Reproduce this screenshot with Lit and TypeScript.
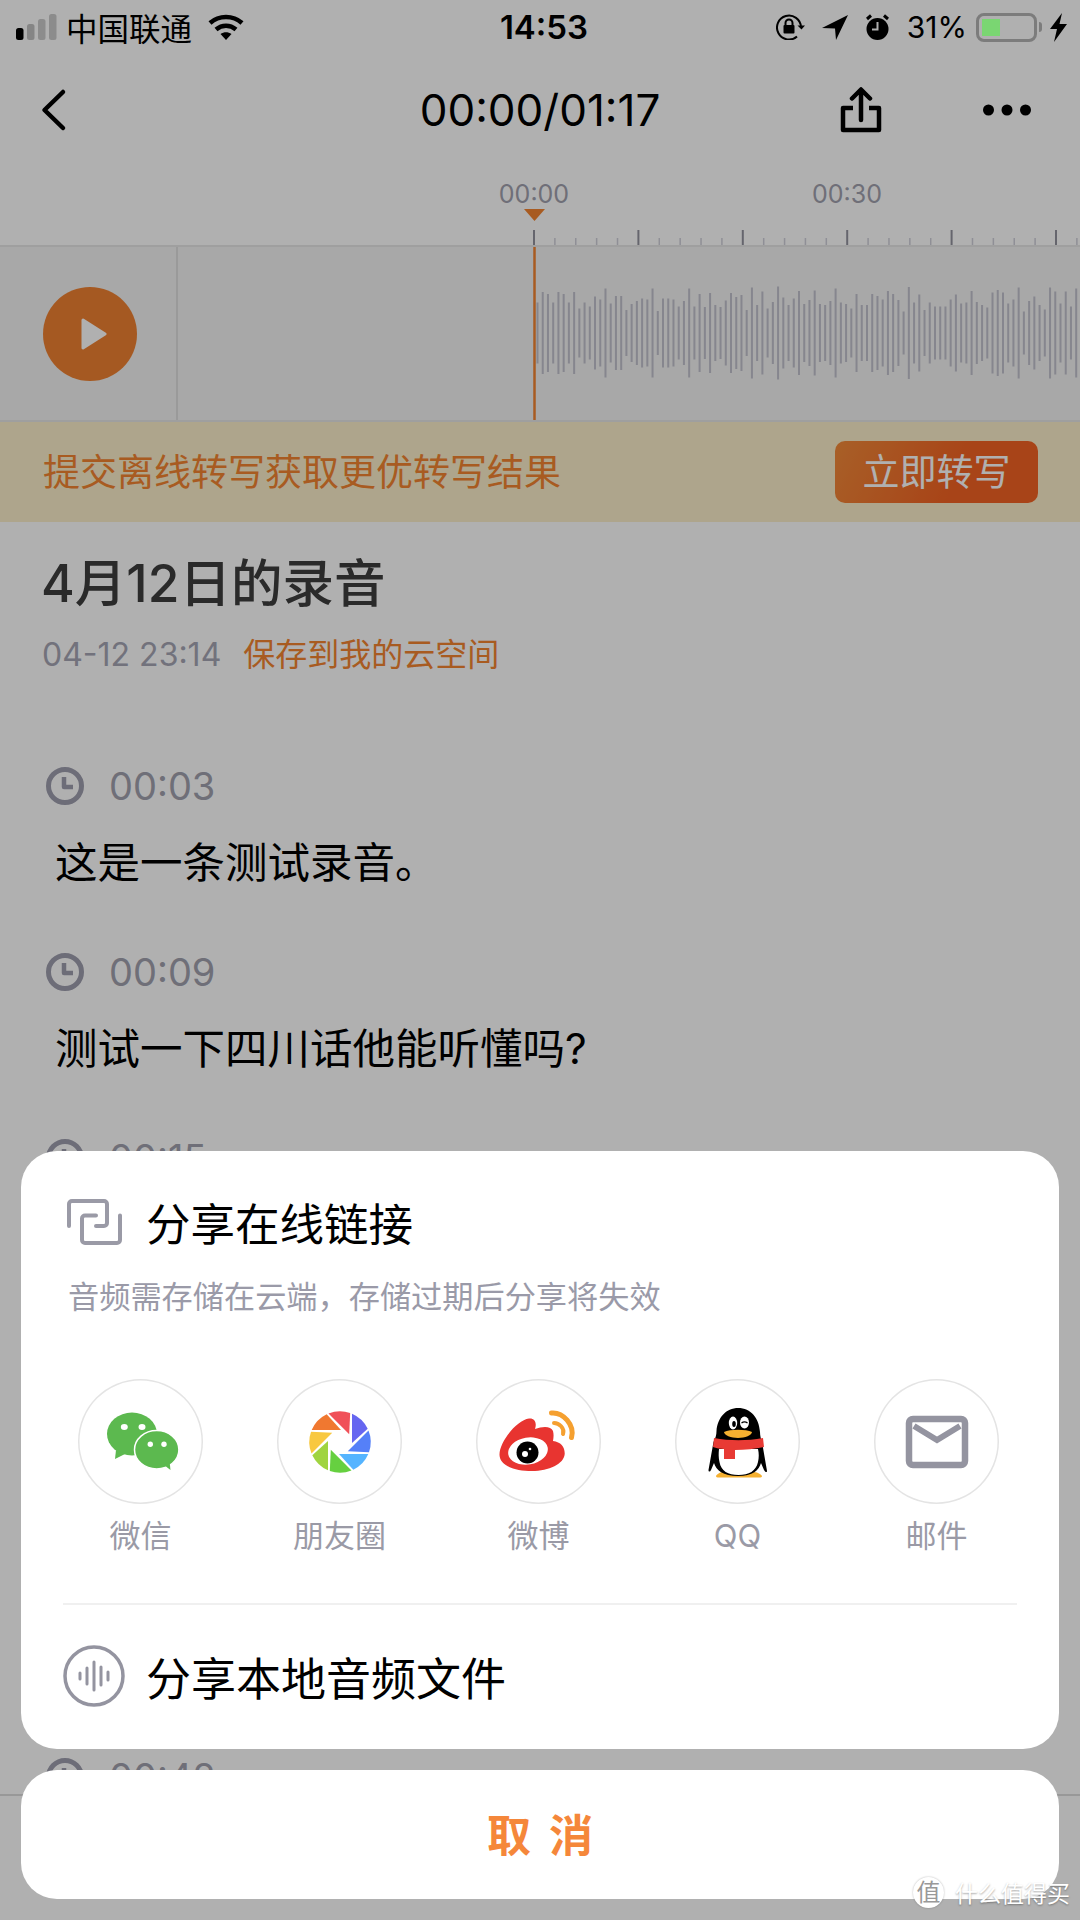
import { LitElement, html, css, svg } from "lit";
import { customElement } from "lit/decorators.js";

// bar heights read off the reference, one per 5.23px
const WAVE = [61,82,78,61,82,78,61,82,49,61,53,73,67,89,59,74,74,46,58,64,69,67,89,44,69,69,67,53,64,89,53,78,52,80,56,52,65,80,72,76,46,91,56,83,49,62,93,71,56,69,84,58,66,85,58,56,64,89,61,58,49,78,56,56,78,74,67,84,78,66,43,92,61,77,46,61,53,53,53,67,77,59,61,84,62,56,51,81,86,81,59,67,91,43,64,73,56,47,91,83,59,83,53,89];

const BLADES = ["#6666f0","#5580f8","#55b4ff","#66d040","#a0d440","#f8c840","#f07830","#f05058"];

const clock = html`<svg class="clock" width="38" height="38" viewBox="0 0 38 38" fill="none" stroke="#9e9eae" stroke-width="5">
  <circle cx="19" cy="19" r="16.5"/><path d="M18 10v10h9" stroke-width="4.5" stroke-linejoin="round"/></svg>`;

const wechat = html`<svg viewBox="0 0 124 124" width="124" height="124">
  <ellipse cx="53" cy="54" rx="25" ry="21.5" fill="#5cb94f"/>
  <path d="M37 70 36 79l10-5z" fill="#5cb94f"/>
  <ellipse cx="45.3" cy="47" rx="3.5" ry="3" fill="#fff"/><ellipse cx="63" cy="47" rx="3.5" ry="3" fill="#fff"/>
  <ellipse cx="77.7" cy="69.7" rx="22.2" ry="19.2" fill="#5cb94f" stroke="#fff" stroke-width="1.5"/>
  <path d="M85 85l6.500 5-1-9z" fill="#5cb94f"/>
  <circle cx="71.300" cy="64.300" r="2.700" fill="#fff"/><circle cx="85" cy="64.300" r="2.700" fill="#fff"/>
</svg>`;

const moments = html`<svg viewBox="0 0 124 124" width="124" height="124">
  ${BLADES.map((c, i) => svg`<path transform="rotate(${i * 45} 62 62)" fill="${c}" d="M74 33.700A30.800 30.800 0 0 1 89.700 48.700L74 63z"/>`)}
</svg>`;

const weibo = html`<svg viewBox="0 0 124 124" width="124" height="124">
  <path fill="#e83430" d="M22.500 75C22 62 40 40 52 38.500 58 38 60 43 58 49 66 46 74 46 76 51 77 55 76.500 58 76 61 84 62 88 67 87.700 74 87 84 72 91 55 91 38 91 23 86 22.500 75Z"/>
  <ellipse cx="51" cy="71" rx="20" ry="13.500" fill="#fff" transform="rotate(-10 51 71)"/>
  <circle cx="50.500" cy="72.500" r="11" fill="#000"/>
  <circle cx="48" cy="74" r="3" fill="#fff"/><circle cx="53" cy="69" r="1.300" fill="#fff"/>
  <path d="M74.500 33C86 32 98 45 94.500 57.500" fill="none" stroke="#f5a030" stroke-width="5" stroke-linecap="round"/>
  <path d="M77 43C82 43 88 48 86 54" fill="none" stroke="#f5a030" stroke-width="4" stroke-linecap="round"/>
</svg>`;

const qq = html`<svg viewBox="0 0 124 124" width="124" height="124">
  <path fill="#f5b030" d="M40 96c2-4 8-5 14-4h16c6-1 14 0 16 4 0 1-1 1.500-3 1.500H43c-2 0-3-.5-3-1.500Z"/>
  <path fill="#000" d="M62 28c13 0 21 10 22 24 0 4 1 7 2 10l5 29c0 2-2 1-3-1l-3-7c-2 7-8 13-23 13s-22-6-24-13l-3 7c-1 2-2.500 2-2.500 0l5-28c2-4 3-7 3-11 1-13 9-23 22-23Z"/>
  <path fill="#fff" d="M43 69h39c1 4 1 9 0 13-2 9-9 13-19.500 13S45 91 43.500 82c-1-4-1-9-.5-13Z"/>
  <path fill="#e83a34" d="M38 58c16 3 33 3 49 0l1 9c-9 2-19 3-29 3v9H48V69c-4 0-8-1-11-2Z"/>
  <path fill="#f5b030" d="M48 52c6-3 22-3 28 0 0 3-7 6-14 6s-14-3-14-6Z"/>
  <ellipse cx="57" cy="43" rx="4.200" ry="6.500" fill="#fff"/><ellipse cx="58" cy="44" rx="1.800" ry="3" fill="#000"/>
  <ellipse cx="68.500" cy="42.500" rx="4.500" ry="6" fill="#fff"/><path d="M65.500 43c2-1.500 4-1.500 6 0" fill="none" stroke="#000" stroke-width="1.300"/>
</svg>`;

const mail = html`<svg viewBox="0 0 124 124" width="124" height="124" fill="none" stroke="#9494a0">
  <rect x="34" y="39" width="56" height="46" rx="4" stroke-width="6.500"/>
  <path d="M39 46l23 14 23-14" stroke-width="6"/>
</svg>`;

@customElement("app-root")
export class AppRoot extends LitElement {
  static styles = css`
    :host {
      display: block;
      position: relative;
      width: 1080px;
      height: 1920px;
      overflow: hidden;
      background: #fff;
      font-family: Inter, "Noto Sans CJK SC", sans-serif;
      color: #000;
    }
    svg { display: block; flex: none; }

    .status {
      position: relative;
      z-index: 2;
      height: 54px;
      display: grid;
      grid-template-columns: 1fr auto 1fr;
      align-items: center;
      font-size: 30px;
    }
    .status-left { display: flex; align-items: center; padding-left: 15px; }
    .carrier { margin-left: 8px; margin-right: 16px; font-size: 31.500px; }
    .clock-time { font-weight: 600; font-size: 33px; padding-left: 8px; }
    .status-right { display: flex; align-items: center; justify-content: flex-end; padding-right: 13px; }
    .pct { margin: 0 9px 0 17px; }
    .battery {
      box-sizing: border-box;
      width: 61px;
      height: 29px;
      border: 3px solid #7c7c7c;
      border-radius: 8px;
      padding: 3px;
    }
    .battery i { display: block; width: 18px; height: 17px; background: #7ad672; }
    .nub { width: 3px; height: 10px; background: #7c7c7c; border-radius: 0 3px 3px 0; margin: 0 8px 0 2px; }

    .nav {
      height: 112px;
      display: grid;
      grid-template-columns: 1fr auto 1fr;
      align-items: center;
      font-size: 44px;
    }
    .back { padding-left: 40px; }
    .nav-right { display: flex; justify-content: flex-end; align-items: center; gap: 101px; padding-right: 49px; }

    .ruler {
      position: relative;
      height: 79px;
    }
    .ruler span {
      position: absolute;
      top: 13px;
      line-height: 30px;
      font-size: 25px;
      color: #a1a1ae;
      transform: translateX(-50%);
    }
    .ruler svg { position: absolute; left: 0; top: 0; }

    .track {
      height: 177px;
      display: flex;
      background: #f3f3f3;
      border-top: 2px solid #e6e6e6;
      border-bottom: 2px solid #e6e6e6;
      box-sizing: border-box;
    }
    .play-cell {
      width: 178px;
      box-sizing: border-box;
      border-right: 2px solid #e0e0e0;
      padding-left: 43px;
      display: flex;
      align-items: center;
    }
    .play {
      width: 94px;
      height: 94px;
      border-radius: 50%;
      background: #f08232;
      display: flex;
      align-items: center;
      justify-content: center;
      padding-left: 8px;
      box-sizing: border-box;
    }

    .banner {
      height: 100px;
      background: #fcf0cb;
      display: flex;
      align-items: center;
      justify-content: space-between;
      padding: 0 42px 0 43px;
      font-size: 37px;
      color: #f38531;
    }
    .banner span { margin-bottom: 4px; }
    .convert {
      box-sizing: border-box;
      width: 203px;
      height: 62px;
      padding-bottom: 4px;
      border-radius: 10px;
      background: linear-gradient(115deg, #f48b3a, #f46323 60%);
      color: #fff;
      font-size: 37px;
      display: flex;
      align-items: center;
      justify-content: center;
    }

    .body { padding: 31px 0 0 41px; }
    .title { font-size: 51.500px; line-height: 60px; font-weight: 500; color: #3d3d3d; }
    .meta { margin-top: 22px; display: flex; gap: 22px; padding-left: 1px; font-size: 32px; line-height: 40px; color: #a5a5b4; }
    .meta em { font-style: normal; color: #f38531; }
    .rows { margin-top: 93px; }
    .row { margin-bottom: 63px; }
    .row.late { margin-top: 496px; }
    .when { display: flex; align-items: center; gap: 25px; padding-left: 5px; height: 36px; font-size: 38px; color: #a1a1ae; }
    .said { margin-top: 31px; padding-left: 14px; font-size: 42.500px; line-height: 56px; height: 56px; }

    .footer {
      position: absolute;
      left: 0;
      right: 0;
      bottom: 0;
      height: 124px;
      background: #fff;
      border-top: 2px solid #dcdcdc;
    }

    .scrim {
      position: absolute;
      inset: 0;
      background: rgba(0, 0, 0, 0.31);
      display: flex;
      flex-direction: column;
      justify-content: flex-end;
      gap: 21px;
      padding: 0 21px 21px;
    }
    .sheet { background: #fff; border-radius: 36px; }
    .share { height: 598px; box-sizing: border-box; padding-top: 47px; }
    .head { display: flex; align-items: center; height: 48px; padding-left: 45px; gap: 24px; font-size: 44.500px; }
    .head span { margin-bottom: 2px; }
    .sub { margin: 27px 0 0 47px; font-size: 31.200px; line-height: 48px; color: #9a9aa8; }
    .targets { display: flex; padding-left: 20px; margin-top: 58px; }
    .target { width: 199px; display: flex; flex-direction: column; align-items: center; font-size: 31px; color: #9a9aa6; }
    .disc {
      width: 125px;
      height: 125px;
      box-sizing: border-box;
      border-radius: 50%;
      box-shadow: inset 0 0 0 1.500px #e4e4e4;
      display: flex;
      align-items: center;
      justify-content: center;
    }
    .target span { margin-top: 12px; line-height: 40px; }
    .rule { height: 2px; background: #f0f0f0; margin: 47px 42px 0; }
    .local { display: flex; align-items: center; gap: 21px; height: 62px; margin: 40px 0 0 42px; font-size: 45px; }
    .cancel {
      box-sizing: border-box;
      height: 129px;
      padding-bottom: 4px;
      display: flex;
      align-items: center;
      justify-content: center;
      font-size: 44px;
      font-weight: 700;
      letter-spacing: 18px;
      text-indent: 18px;
      color: #f5873a;
    }

    .mark {
      position: absolute;
      z-index: 3;
      right: 10px;
      bottom: 11px;
      display: flex;
      align-items: center;
      gap: 11px;
      font-size: 23px;
      color: #fff;
      text-shadow: 0 1px 2px rgba(0, 0, 0, 0.35);
    }
    .mark b {
      width: 31px;
      height: 31px;
      border-radius: 50%;
      background: #fff;
      color: #999;
      font-weight: 400;
      font-size: 24px;
      line-height: 31px;
      text-align: center;
      text-shadow: none;
      box-shadow: 0 0 2px rgba(0, 0, 0, 0.3);
    }
  `;

  private statusBar() {
    return html`<div class="status">
      <div class="status-left">
        <svg width="43" height="28" viewBox="0 0 43 28">
          <rect x="1" y="15" width="7.500" height="12" rx="2.500" fill="#000"/>
          <rect x="12" y="11" width="7.500" height="16" rx="2.500" fill="#858585"/>
          <rect x="23" y="6" width="7.500" height="21" rx="2.500" fill="#8c8c8c"/>
          <rect x="34" y="1" width="7.500" height="26" rx="2.500" fill="#8c8c8c"/>
        </svg>
        <span class="carrier">中国联通</span>
        <svg width="36" height="26" viewBox="0 0 36 26" fill="none" stroke="#000" stroke-width="4.500">
          <path d="M2 9C11 1 25 1 34 9"/><path d="M8 15.500C14 10.500 22 10.500 28 15.500"/>
          <path d="M12.500 20C16 17.500 20 17.500 23.500 20L18 26Z" fill="#000" stroke="none"/>
        </svg>
      </div>
      <div class="clock-time">14:53</div>
      <div class="status-right">
        <svg width="30" height="26" viewBox="0 0 30 26" fill="none" stroke="#000" stroke-width="2">
          <path d="M25 13A12 12 0 1 0 21 22.500"/><path d="M21.500 11.500L25.500 15.500 29 11.500" fill="#000" stroke="none"/>
          <rect x="7.500" y="11" width="11" height="8.500" rx="1" fill="#000" stroke="none"/>
          <path d="M9.500 11V9a3.500 3.500 0 0 1 7 0v2"/>
        </svg>
        <svg style="margin-left:16px" width="26" height="26" viewBox="0 0 26 26"><path d="M26 1L0 14 13 14.500 14 26Z" fill="#000"/></svg>
        <svg style="margin-left:17px" width="25" height="27" viewBox="0 0 25 27">
          <circle cx="12.500" cy="15" r="11" fill="#000"/>
          <path d="M2 5L6 1.500M23 5L19 1.500" stroke="#000" stroke-width="3"/>
          <path d="M12.500 8v7.500H7" fill="none" stroke="#b0b0b0" stroke-width="2"/>
        </svg>
        <span class="pct">31%</span>
        <div class="battery"><i></i></div>
        <div class="nub"></div>
        <svg width="17" height="29" viewBox="0 0 17 29"><path d="M12 0L0 16H7L4 29 17 11H9.500Z" fill="#000"/></svg>
      </div>
    </div>`;
  }

  private navBar() {
    return html`<div class="nav">
      <div class="back">
        <svg width="28" height="44" viewBox="0 0 28 44" fill="none" stroke="#000" stroke-width="4.500" stroke-linecap="round" stroke-linejoin="round">
          <path d="M23 4L4.500 22 23 40"/>
        </svg>
      </div>
      <div>00:00/01:17</div>
      <div class="nav-right">
        <svg width="42" height="46" viewBox="0 0 42 46" fill="none" stroke="#000" stroke-width="4.500" stroke-linejoin="round" stroke-linecap="round">
          <path d="M13 21H3V43H39V21H29" stroke-linecap="butt"/><path d="M21 33V3M12 11.500L21 2.500 30 11.500"/>
        </svg>
        <svg width="48" height="12" viewBox="0 0 48 12" fill="#000">
          <circle cx="5.500" cy="6" r="5.500"/><circle cx="24" cy="6" r="5.500"/><circle cx="42.500" cy="6" r="5.500"/>
        </svg>
      </div>
    </div>`;
  }

  private ruler() {
    const ticks = [];
    for (let i = 0; i < 27; i++) {
      const x = 534 + i * 20.88;
      const major = i % 5 === 0;
      ticks.push(svg`<line x1=${x} x2=${x} y1=${major ? 64 : 72} y2="79" stroke=${major ? "#93939f" : "#cfcfd9"} stroke-width=${major ? 2 : 1.5}/>`);
    }
    return html`<div class="ruler">
      <svg width="1080" height="79" viewBox="0 0 1080 79">
        ${ticks}
        <path d="M524 43H545L534.500 55Z" fill="#f38531"/>
      </svg>
      <span style="left:534px">00:00</span>
      <span style="left:847px">00:30</span>
    </div>`;
  }

  private track() {
    return html`<div class="track">
      <div class="play-cell">
        <div class="play">
          <svg width="26" height="34" viewBox="0 0 26 34">
            <path d="M2 3L24 17 2 31Z" fill="#fff" stroke="#fff" stroke-width="3" stroke-linejoin="round"/>
          </svg>
        </div>
      </div>
      <svg width="902" height="173" viewBox="0 0 902 173">
        ${WAVE.map((h, i) => {
          const x = 359.5 + i * 5.23;
          return svg`<line x1=${x} x2=${x} y1=${86 - h / 2} y2=${86 + h / 2} stroke="#c2c2ce" stroke-width="2"/>`;
        })}
        <line x1="356.500" x2="356.500" y1="0" y2="173" stroke="#f38531" stroke-width="2.500"/>
      </svg>
    </div>`;
  }

  private entry(time: string, text: string, late = false) {
    return html`<div class="row ${late ? "late" : ""}">
      <div class="when">${clock}<span>${time}</span></div>
      <div class="said">${text}</div>
    </div>`;
  }

  private shareSheet() {
    const targets: [string, unknown][] = [["微信", wechat], ["朋友圈", moments], ["微博", weibo], ["QQ", qq], ["邮件", mail]];
    return html`<div class="sheet share">
      <div class="head">
        <svg width="56" height="48" viewBox="0 0 56 48" fill="none" stroke="#9a9aa6" stroke-width="4" stroke-linecap="round">
          <path d="M3 28V6a3 3 0 0 1 3-3H38a3 3 0 0 1 3 3V25a3 3 0 0 1-3 3H30"/>
          <path d="M30 17.500H19a3 3 0 0 0-3 3V42a3 3 0 0 0 3 3H51a3 3 0 0 0 3-3V17.500"/>
        </svg>
        <span>分享在线链接</span>
      </div>
      <div class="sub">音频需存储在云端\uFF0C存储过期后分享将失效</div>
      <div class="targets">
        ${targets.map(([name, icon]) => html`<div class="target"><div class="disc">${icon}</div><span>${name}</span></div>`)}
      </div>
      <div class="rule"></div>
      <div class="local">
        <svg width="62" height="62" viewBox="0 0 62 62" fill="none" stroke="#9494a0">
          <circle cx="31" cy="31" r="29" stroke-width="3.500"/>
          <path d="M17 28v6M24 23v16M31 17v28M38 22v18M45 27v8" stroke-width="3" stroke-linecap="round"/>
        </svg>
        <span>分享本地音频文件</span>
      </div>
    </div>`;
  }

  render() {
    return html`
      ${this.statusBar()}
      ${this.navBar()}
      ${this.ruler()}
      ${this.track()}
      <div class="banner"><span>提交离线转写获取更优转写结果</span><div class="convert">立即转写</div></div>
      <div class="body">
        <div class="title">4月12日的录音</div>
        <div class="meta"><span>04-12 23:14</span><em>保存到我的云空间</em></div>
        <div class="rows">
          ${this.entry("00:03", "这是一条测试录音。")}
          ${this.entry("00:09", "测试一下四川话他能听懂吗?")}
          ${this.entry("00:15", "")}
          ${this.entry("00:42", "", true)}
        </div>
      </div>
      <div class="footer"></div>
      <div class="scrim">
        ${this.shareSheet()}
        <div class="sheet cancel">取消</div>
      </div>
      <div class="mark"><b>值</b><span>什么值得买</span></div>
    `;
  }
}
